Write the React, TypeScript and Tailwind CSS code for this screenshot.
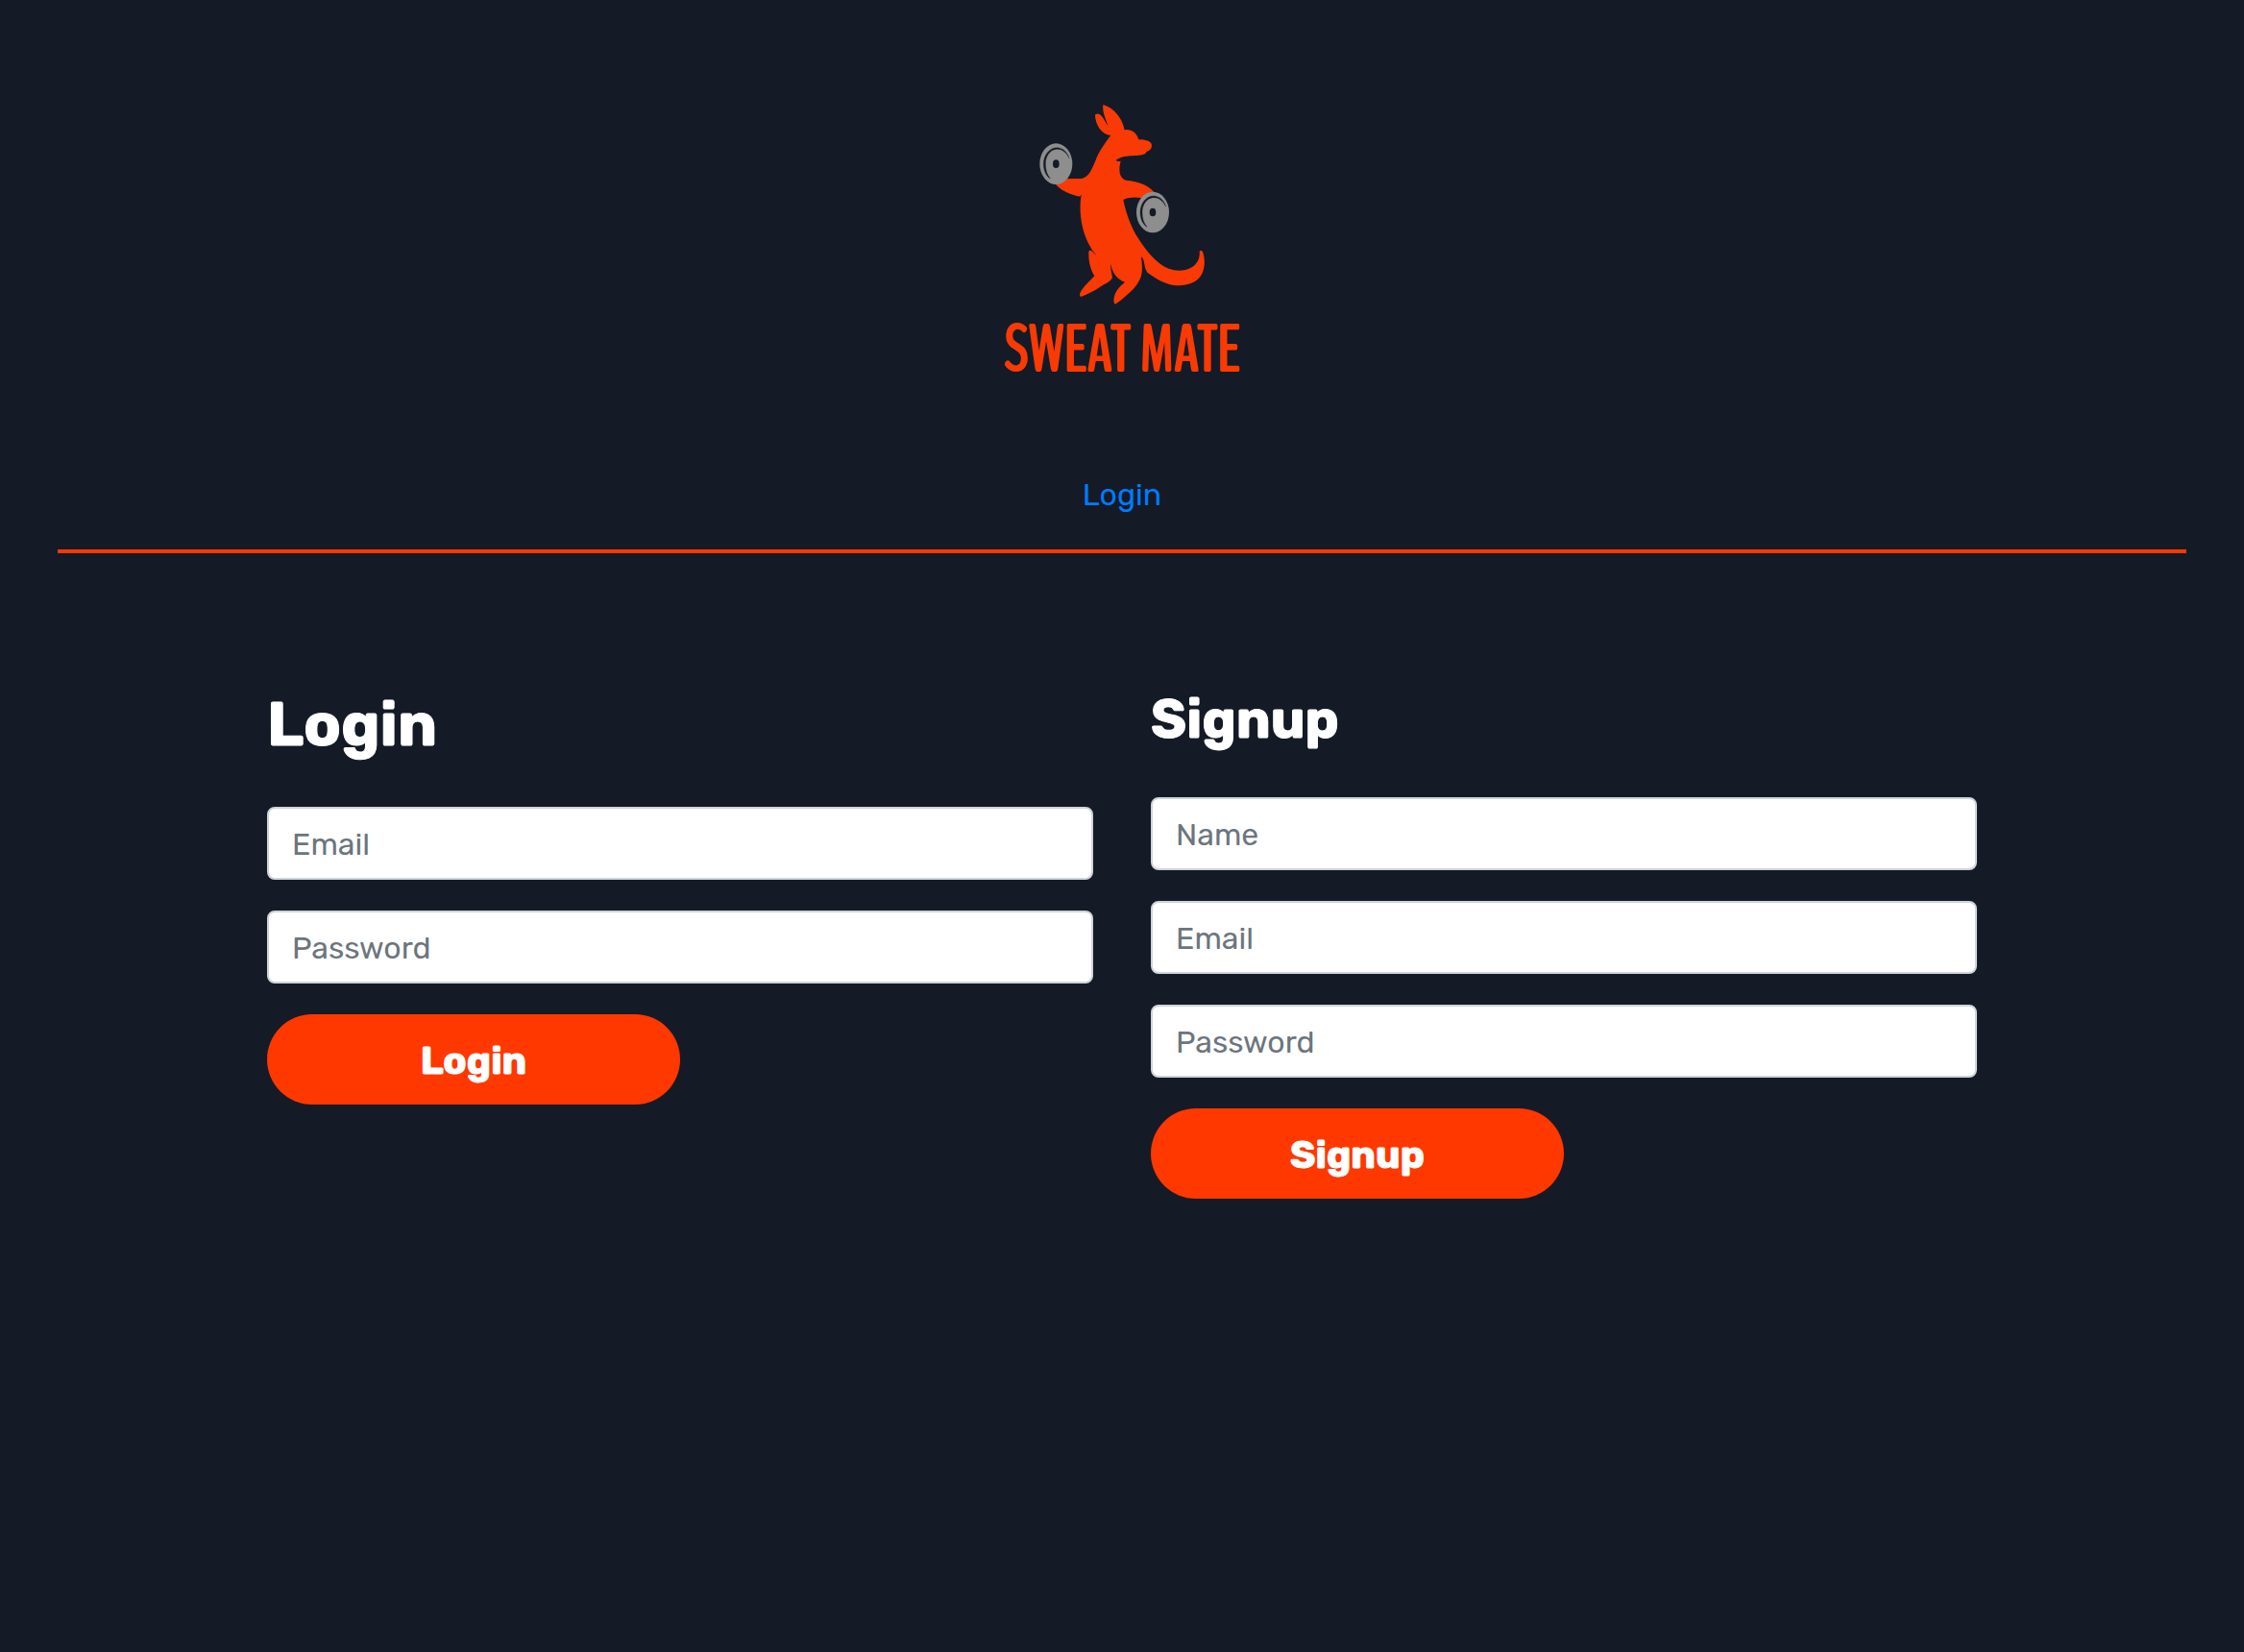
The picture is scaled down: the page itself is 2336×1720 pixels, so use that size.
import React from "react";

function Plate({ cx, cy }: { cx: number; cy: number }) {
  return (
    <g transform={`translate(${cx} ${cy})`}>
      <ellipse rx="51" ry="64" fill="#8e8e8e" />
      <path
        d="M41 -18 C35 -38 21 -50 3 -51 C-20 -51 -39 -28 -39 0 C-39 20 -31 38 -18 46 C-28 34 -33 18 -33 0 C-33 -25 -18 -45 3 -46 C19 -46 32 -36 41 -18 Z"
        fill="#141b27"
        stroke="#141b27"
        strokeWidth="1"
        strokeLinejoin="round"
      />
      <ellipse rx="10" ry="13" fill="#141b27" />
    </g>
  );
}

function Logo() {
  return (
    <svg viewBox="-96 0 840 1020" className="h-[340px] w-[280px]" role="img" aria-label="Sweat Mate">
      <path
        fill="#f93a05"
        d="M265 57 C297 66 325 98 332 136 C350 132 369 142 376 166 C398 165 417 172 417 184 C417 195 411 201 402 203 C398 205 400 209 395 211 C385 216 368 216 350 217 C333 218 315 222 305 231 C310 235 315 234 320 233 C312 262 316 286 336 293 C372 297 402 304 424 330 L400 354 C375 344 350 345 328 354 C337 398 353 442 375 475 C405 522 435 555 470 569 C500 580 535 576 553 556 C565 542 567 530 566 516 C568 511 573 511 577 519 C585 545 583 580 563 600 C547 617 520 622 493 622 C460 619 430 601 404 582 C396 573 395 560 392 545 C391 540 388 536 384 532 C386 550 389 570 384 592 C376 617 359 635 342 649 C330 660 318 671 303 680 C297 678 298 669 299 661 C303 637 318 624 333 611 C308 604 293 580 288 553 C288 570 291 582 294 597 C287 612 268 617 251 629 C234 640 215 649 196 657 C191 655 192 650 193 646 C203 624 223 609 238 592 C226 572 219 548 220 516 C223 509 230 513 234 518 L246 530 C215 495 197 445 194 392 C193 365 194 345 202 322 C199 330 198 339 194 343 C189 344 186 343 180 341 C156 334 130 324 115 303 L150 289 C170 287 188 289 200 287 C222 282 229 259 240 235 C252 202 270 178 289 153 C260 151 240 120 240 88 C246 85 251 85 255 88 C267 97 271 112 280 122 C274 102 262 82 265 57 Z"
      />
      <Plate cx={118} cy={242} />
      <Plate cx={420} cy={393} />
      <text
        x="325"
        y="887"
        textAnchor="middle"
        className="fill-[#f93a05] stroke-[#f93a05] font-['BenchNine','Roboto',sans-serif] text-[202px] [stroke-linejoin:round] [stroke-width:6px]"
      >
        SWEAT MATE
      </text>
    </svg>
  );
}

function Field({ id, type, label }: { id: string; type: string; label: string }) {
  return (
    <input
      id={id}
      type={type}
      placeholder={label}
      aria-label={label}
      className="h-[76px] w-full rounded-lg border-2 border-[#ced4da] bg-white px-6 pt-0.5 text-[32px] text-[#495057] placeholder:text-[#6c757d]"
    />
  );
}

function SubmitButton({ children }: { children: React.ReactNode }) {
  return (
    <button
      type="submit"
      className="h-[94px] w-1/2 rounded-full bg-[#ff3800] pt-1 text-[40px] font-bold text-white [-webkit-text-stroke:1px_white]"
    >
      {children}
    </button>
  );
}

export default function App() {
  return (
    <div className="min-h-screen bg-[#141b26] px-[60px] pt-[90px] font-[Rubik,Inter,sans-serif] text-white">
      <header className="flex flex-col items-center border-b-4 border-[#ff3800] pb-[33px]">
        <Logo />
        <nav className="mt-[61px] text-[32px] leading-[48px]">
          <a href="#login" className="text-[#007bff]">
            Login
          </a>
        </nav>
      </header>
      <main className="mx-auto mt-[140px] grid max-w-[1780px] grid-cols-2 items-start gap-[60px]">
        <form id="login" className="flex flex-col gap-8">
          <h1 className="mb-[15px] text-[64px] leading-[77px] font-bold [-webkit-text-stroke:1px_white]">Login</h1>
          <Field id="login-email" type="email" label="Email" />
          <Field id="login-password" type="password" label="Password" />
          <SubmitButton>Login</SubmitButton>
        </form>
        <form id="signup" className="flex flex-col gap-8">
          <h2 className="mb-[15px] text-[56px] leading-[67px] font-bold [-webkit-text-stroke:1px_white]">Signup</h2>
          <Field id="signup-name" type="text" label="Name" />
          <Field id="signup-email" type="email" label="Email" />
          <Field id="signup-password" type="password" label="Password" />
          <SubmitButton>Signup</SubmitButton>
        </form>
      </main>
    </div>
  );
}
